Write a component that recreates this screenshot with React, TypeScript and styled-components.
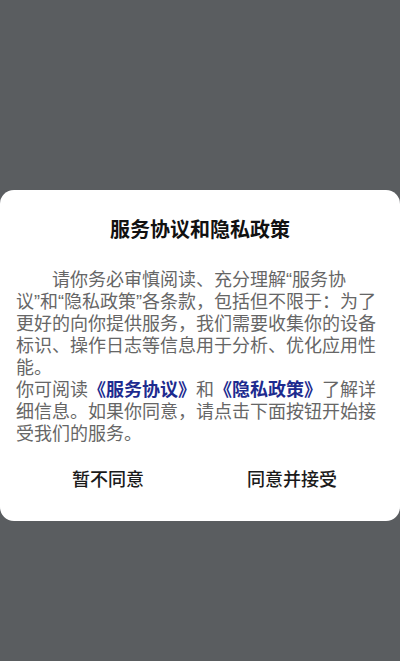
import React from "react";
import styled, { createGlobalStyle } from "styled-components";

const GlobalStyle = createGlobalStyle`
  html, body {
    margin: 0;
    padding: 0;
    background: #5a5d60;
  }
  body {
    font-family: "Liberation Sans", "Noto Sans CJK SC", sans-serif;
  }
`;

const Overlay = styled.div`
  width: 400px;
  height: 661px;
  background: #5a5d60;
  padding-top: 190px;
  box-sizing: border-box;
`;

const Card = styled.div`
  background: #ffffff;
  border-radius: 14px;
  padding: 28px 16px 21px;
  display: flex;
  flex-direction: column;
`;

const Title = styled.h2`
  margin: 0;
  font-size: 20px;
  line-height: 24px;
  font-weight: bold;
  color: #111;
  text-align: center;
`;

const Body = styled.div`
  margin-top: 27px;
  width: 360px;
  font-size: 18px;
  line-height: 22px;
  color: #666;
`;

const Para = styled.p<{ $indent?: boolean }>`
  margin: 0;
  text-indent: ${(p) => (p.$indent ? "2em" : "0")};
`;

const Link = styled.a`
  color: #1d2b8f;
  font-weight: bold;
  text-decoration: none;
`;

const Actions = styled.div`
  margin-top: 11px;
  display: flex;
`;

const Action = styled.button`
  flex: 1;
  height: 44px;
  border: none;
  background: none;
  font-family: inherit;
  font-size: 18px;
  font-weight: 500;
  color: #1a1a1a;
  cursor: pointer;
`;

export default function App() {
  return (
    <>
      <GlobalStyle />
      <Overlay>
        <Card>
          <Title>服务协议和隐私政策</Title>
          <Body lang="zh-CN">
            <Para $indent>
              请你务必审慎阅读、充分理解“服务协<br />议”和“隐私政策”各条款，包括但不限于：为了更好的向你提供服务，我们需要收集你的设备标识、操作日志等信息用于分析、优化应用性能。
            </Para>
            <Para>
              你可阅读<Link href="#">《服务协议》</Link>和<Link href="#">《隐私政策》</Link>了解详细信息。如果你同意，请点击下面按钮开始接受我们的服务。
            </Para>
          </Body>
          <Actions>
            <Action>暂不同意</Action>
            <Action>同意并接受</Action>
          </Actions>
        </Card>
      </Overlay>
    </>
  );
}
